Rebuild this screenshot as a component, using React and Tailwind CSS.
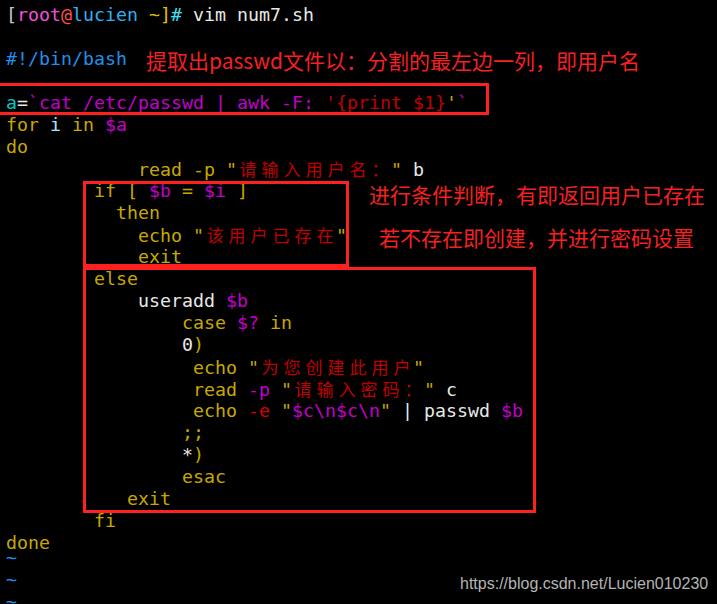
import React from "react";

const Y = "text-[#c8a800]";
const M = "text-[#c000c8]";
const R = "text-[#c00000]";
const RE = "text-[#d80000]";
const W = "text-[#e8e8e8]";
const B = "text-[#2090ee]";
const CJK = "cjk";
const TILDE = "tilde";

const lines = [
  [["Saved.", W]],
  [
    ["[", "text-[#c8c8c8]"],
    ["root", "text-[#f050d8]"],
    ["@", "text-[#ff5050]"],
    ["lucien", "text-[#30b0f0]"],
    [" ", W],
    ["~", "text-[#d8c000]"],
    ["]", "text-[#e0c000]"],
    ["#", "text-[#40e0f8]"],
    [" vim num7.sh", W],
  ],
  [],
  [["#!/bin/bash", B]],
  [],
  [
    ["a", "text-[#00c8c8]"],
    ["=", W],
    ["`cat /etc/passwd | awk -F: ", M],
    ["'{print $1}", R],
    ["'", Y],
    ["`", M],
  ],
  [["for ", Y], ["i", "text-[#b0e0ff]"], [" in ", Y], ["$a", M]],
  [["do", Y]],
  [["            read -p \"", Y], ["请输入用户名：", CJK], ["\" ", Y], ["b", W]],
  [["        if [ ", Y], ["$b", M], [" = ", Y], ["$i", M], [" ]", Y]],
  [["          then", Y]],
  [["            echo \"", Y], ["该用户已存在", CJK], ["\"", Y]],
  [["            exit", Y]],
  [["        else", Y]],
  [["            useradd ", W], ["$b", M]],
  [["                case ", Y], ["$?", M], [" in", Y]],
  [["                0", W], [")", Y]],
  [["                 echo \"", Y], ["为您创建此用户", CJK], ["\"", Y]],
  [["                 read ", Y], ["-p", M], [" \"", Y], ["请输入密码：", CJK], ["\" ", Y], ["c", W]],
  [
    ["                 echo ", Y],
    ["-e", RE],
    [" \"", Y],
    ["$c\\n$c\\n", M],
    ["\" ", Y],
    ["|", "text-[#d8ecff]"],
    [" passwd ", W],
    ["$b", M],
  ],
  [["                ;;", Y]],
  [["                *", W], [")", Y]],
  [["                esac", Y]],
  [["           exit", Y]],
  [["        fi", Y]],
  [["done", Y]],
  [["~", TILDE]],
  [["~", TILDE]],
  [["~", TILDE]],
];

function Seg({ text, cls }) {
  if (cls === CJK) {
    return (
      <span className="text-[#c00000]">
        {Array.from(text).map((ch, i) => (
          <span
            key={i}
            className="inline-block w-[22px] text-center text-[17px] font-['Noto_Sans_CJK_SC',sans-serif]"
          >
            {ch}
          </span>
        ))}
      </span>
    );
  }
  if (cls === TILDE) {
    return <span className="inline-block -translate-y-[7px] text-[#2090ee]">{text}</span>;
  }
  return <span className={cls}>{text}</span>;
}

export default function App() {
  return (
    <div className="relative w-[717px] h-[604px] overflow-hidden bg-black">
      <div className="flex flex-col pl-[6px] font-['DejaVu_Sans_Mono',monospace] text-[18.27px]">
        {lines.map((segs, i) => (
          <div
            key={i}
            className={
              "h-[22px] leading-[22px] whitespace-pre " + (i === 0 ? "mt-[-18px]" : "")
            }
          >
            {segs.map(([t, c], j) => (
              <Seg key={j} text={t} cls={c} />
            ))}
          </div>
        ))}
      </div>

      {/* annotation boxes */}
      <div className="absolute left-[-3px] top-[83px] w-[492px] h-[32px] border-[3px] border-[#ff2020]" />
      <div className="absolute left-[83px] top-[181px] w-[266px] h-[86px] border-[3px] border-[#ff2020]" />
      <div className="absolute left-[83px] top-[267px] w-[453px] h-[246px] border-[3px] border-[#ff2020]" />

      {/* annotation texts */}
      <div className="absolute left-[146px] top-[49px] leading-[22px] text-[21px] text-[#f52020] whitespace-nowrap font-['Noto_Sans_CJK_SC',sans-serif]">
        提取出passwd文件以：分割的最左边一列，即用户名
      </div>
      <div className="absolute left-[369px] top-[183px] leading-[22px] text-[21px] text-[#f52020] whitespace-nowrap font-['Noto_Sans_CJK_SC',sans-serif]">
        进行条件判断，有即返回用户已存在
      </div>
      <div className="absolute left-[379px] top-[226px] leading-[22px] text-[21px] text-[#f52020] whitespace-nowrap font-['Noto_Sans_CJK_SC',sans-serif]">
        若不存在即创建，并进行密码设置
      </div>

      <div className="absolute left-[460px] top-[575px] leading-[18px] text-[16px] text-[#b4b4b4] whitespace-nowrap font-['Liberation_Sans',sans-serif]">
        https://blog.csdn.net/Lucien010230
      </div>
    </div>
  );
}
